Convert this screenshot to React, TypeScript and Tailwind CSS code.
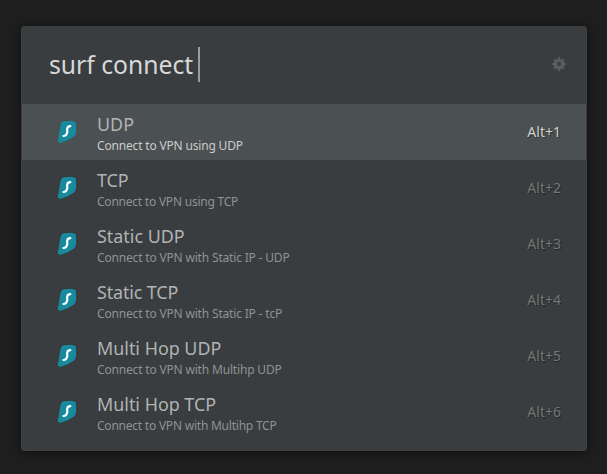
const rows = [
  ['UDP', 'Connect to VPN using UDP'],
  ['TCP', 'Connect to VPN using TCP'],
  ['Static UDP', 'Connect to VPN with Static IP - UDP'],
  ['Static TCP', 'Connect to VPN with Static IP - tcP'],
  ['Multi Hop UDP', 'Connect to VPN with Multihp UDP'],
  ['Multi Hop TCP', 'Connect to VPN with Multihp TCP'],
];

function Logo() {
  return (
    <svg width="20" height="24" viewBox="0 0 20 24" className="shrink-0">
      <path d="M8.500 1H15.500Q19 1 19 4.500V12Q19 15 16.500 16.800Q12 20 5.500 22.300C2.500 23.300 .7 22.500 1 20L3.600 5Q4.400 1 8.500 1Z" fill="#178a9e" />
      <path d="M13.300 6.200C11 6.200 10.300 7.300 10.200 9C10.100 10.800 10.700 11.500 9.900 13.400C9.200 15.300 8.200 16 6.500 16" fill="none" stroke="#fff" strokeWidth="2.200" strokeLinecap="round" />
    </svg>
  );
}

function Gear() {
  return (
    <svg className="ml-auto" width="14" height="14" viewBox="0 0 14 14">
      <circle cx="7" cy="7" r="3.700" fill="none" stroke="#5a5c5d" strokeWidth="3.300" />
      <path d="M7 0V3M7 11V14M0 7H3M11 7H14M2.200 2.200L4 4M10 10L11.800 11.800M2.200 11.800L4 10M10 4L11.800 2.200" stroke="#5a5c5d" strokeWidth="2.200" />
    </svg>
  );
}

export default function App() {
  return (
    <main className="h-[474px] w-[607px] bg-[#1e1e1e] pt-[26px] pl-[21px] font-['Noto_Sans',sans-serif]">
      <section className="h-[425px] w-[566px] overflow-hidden rounded-[3px] border border-[#3f4040] bg-[#393d3f] shadow-[0_1px_10px_#0008]">
        <header className="flex h-[77px] items-center pr-5 pb-[3px] pl-[27px]">
          <span className="pt-0.5 text-[24.700px] leading-9 whitespace-pre text-[#d8d8d8]">surf connect</span>
          <span className="ml-[5px] h-[35px] w-0.5 bg-[#9c9c9c]" />
          <Gear />
        </header>
        {rows.map(([title, subtitle], i) => (
          <div key={title} className={`flex h-14 items-center pr-[25px] pl-[35px] ${i === 0 ? 'bg-[#4b5052]' : ''}`}>
            <Logo />
            <div className="ml-5 flex-1 pt-[3px]">
              <div className={`text-[17.900px] leading-6 text-[#b2b3b3] ${title === 'TCP' || title === 'Static TCP' ? 'tracking-[-0.12px]' : ''}`}>{title}</div>
              <div className={`text-[12px] leading-[19px] ${subtitle.endsWith('TCP') ? 'tracking-[-0.225px]' : 'tracking-[-0.175px]'} ${i === 0 ? 'text-[#cbcccc]' : 'text-[#909293]'}`}>{subtitle}</div>
            </div>
            <span className={`pb-0.5 text-[14px] [text-shadow:1px_1px_1px_#0006] ${i === 0 ? 'text-[#d2d2d2]' : 'text-[#757677]'}`}>Alt+{i + 1}</span>
          </div>
        ))}
      </section>
    </main>
  );
}
